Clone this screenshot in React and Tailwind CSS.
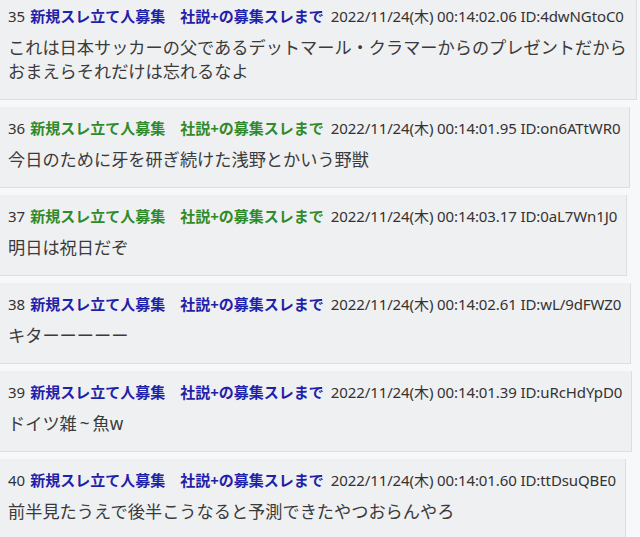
import React from 'react';

const posts = [
  { no: 35, color: 'blue', date: '2022/11/24(木) 00:14:02.06', id: '4dwNGtoC0', body: ['これは日本サッカーの父であるデットマール・クラマーからのプレゼントだから', 'おまえらそれだけは忘れるなよ'] },
  { no: 36, color: 'green', date: '2022/11/24(木) 00:14:01.95', id: 'on6ATtWR0', body: ['今日のために牙を研ぎ続けた浅野とかいう野獣'] },
  { no: 37, color: 'green', date: '2022/11/24(木) 00:14:03.17', id: '0aL7Wn1J0', body: ['明日は祝日だぞ'] },
  { no: 38, color: 'blue', date: '2022/11/24(木) 00:14:02.61', id: 'wL/9dFWZ0', body: ['キターーーーー'] },
  { no: 39, color: 'blue', date: '2022/11/24(木) 00:14:01.39', id: 'uRcHdYpD0', body: [<>ドイツ雑<span className="mx-[3px]">~</span>魚w</>] },
  { no: 40, color: 'blue', date: '2022/11/24(木) 00:14:01.60', id: 'ttDsuQBE0', body: ['前半見たうえで後半こうなると予測できたやつおらんやろ'] },
];

function Post({ post }) {
  const nameColor = post.color === 'green' ? 'text-[#2f8a2a]' : 'text-[#1f22a8]';
  return (
    <div className="w-fit bg-[#eff0f2] border-r border-b border-[#dcdee2] pl-[8px] pr-[9px] pt-[9px] pb-[15px]">
      <div className="flex items-center h-[24px] text-[15px] text-[#333] whitespace-nowrap">
        <span>{post.no}</span>
        <span className={`ml-[5px] font-bold ${nameColor}`}>新規スレ立て人募集</span>
        <span className={`ml-[15px] font-bold ${nameColor}`}>社説+の募集スレまで</span>
        <span className="ml-[7px] tracking-[-0.1px]">{post.date} ID:{post.id}</span>
      </div>
      <div className="mt-[8px] text-[17.2px] text-[#3a3a3a]">
        {post.body.map((line, i) => (
          <div key={i} className="h-[24px] leading-[24px] whitespace-nowrap">{line}</div>
        ))}
      </div>
    </div>
  );
}

export default function App() {
  return (
    <div
      className="w-[640px] h-[537px] overflow-hidden bg-[#f7f8fa]"
      style={{ fontFamily: '"Noto Sans", "Noto Sans CJK JP", sans-serif' }}
    >
      <div className="mt-[-5px] flex flex-col gap-[7px]">
        {posts.map(p => (
          <Post key={p.no} post={p} />
        ))}
      </div>
    </div>
  );
}
